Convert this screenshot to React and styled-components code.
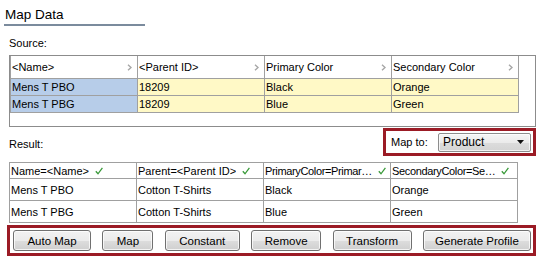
import React from 'react';
import styled, { createGlobalStyle } from 'styled-components';

const GlobalStyle = createGlobalStyle`
  html, body {
    margin: 0;
    padding: 0;
    background: #fff;
  }
  body {
    font-family: "Liberation Sans", Arial, sans-serif;
    font-size: 11px;
    color: #000;
  }
`;

const Page = styled.div`
  width: 539px;
  height: 260px;
  overflow: hidden;
  display: flex;
  flex-direction: column;
`;

const Title = styled.h1`
  margin: 0 0 0 4px;
  width: 140px;
  padding: 7px 0 1px 1px;
  font-size: 13.5px;
  line-height: 16px;
  font-weight: normal;
  border-bottom: 2px solid #7b8b9d;
`;

const Label = styled.div`
  margin: ${p => p.$top || 0}px 0 0 9px;
  line-height: 13px;
  padding-top: ${p => p.$pad || 0}px;
`;

const SourceBox = styled.div`
  margin: 5px 0 0 9px;
  width: 527px;
  height: 72px;
  box-sizing: border-box;
  border: 1px solid #8c8c8c;
  background: #fff;
`;

const Grid = styled.div`
  display: grid;
  grid-template-columns: repeat(4, 127px);
  grid-auto-rows: ${p => p.$row}px;
  grid-template-rows: ${p => p.$head}px;
  width: max-content;
  border-left: 1px solid #a0a0a0;
  border-top: ${p => (p.$framed ? '1px solid #a0a0a0' : 'none')};
`;

const Cell = styled.div`
  box-sizing: border-box;
  border-right: 1px solid #a0a0a0;
  border-bottom: 1px solid #a0a0a0;
  padding: 0 0 0 1px;
  display: flex;
  align-items: center;
  white-space: nowrap;
  overflow: hidden;
  background: ${p => p.$bg || '#fff'};
`;

const HeadText = styled.span`
  flex: ${p => (p.$grow ? 1 : '0 1 auto')};
  overflow: hidden;
  text-overflow: ellipsis;
  letter-spacing: ${p => p.$tight ? '-0.35px' : 'normal'};
`;

const Chevron = styled.svg`
  width: 5px;
  height: 7px;
  margin-right: 5px;
  flex: none;
`;

const Check = styled.svg`
  width: 8px;
  height: 8px;
  margin-left: 6px;
  flex: none;
`;

const MidRow = styled.div`
  display: flex;
  justify-content: space-between;
  align-items: flex-start;
  margin-top: 1px;
  height: 28px;
`;

const MapToBox = styled.div`
  width: 153px;
  height: 28px;
  box-sizing: border-box;
  margin-right: 3px;
  border: 3px solid #9b1b25;
  display: flex;
  align-items: center;
  justify-content: space-between;
  padding: 0 2px 0 5px;
`;

const Select = styled.div`
  width: 93px;
  height: 19px;
  box-sizing: border-box;
  border: 1px solid #8d8d8d;
  border-radius: 2px;
  background: linear-gradient(#f5f5f5, #ebebeb 50%, #dcdcdc 51%, #d4d4d4);
  box-shadow: inset 0 0 0 1px rgba(255, 255, 255, 0.7);
  display: flex;
  align-items: center;
  justify-content: space-between;
  padding: 0 6px 0 4px;
  font-size: 12px;
`;

const ResultWrap = styled.div`
  margin: 6px 0 0 9px;
`;

const ButtonBar = styled.div`
  margin: 2px 0 0 7px;
  width: 529px;
  height: 31px;
  box-sizing: border-box;
  border: 3px solid #9b1b25;
  display: flex;
  align-items: center;
  justify-content: space-between;
  padding: 0 2px 0 3px;
`;

const Button = styled.button`
  width: ${p => p.$w}px;
  height: 21px;
  box-sizing: border-box;
  border: 1px solid #707070;
  border-radius: 3px;
  background: linear-gradient(#f2f2f2, #ebebeb 50%, #dddddd 51%, #cfcfcf);
  box-shadow: inset 0 0 0 1px rgba(255, 255, 255, 0.75);
  font-family: "Liberation Sans", Arial, sans-serif;
  font-size: 11.5px;
  color: #000;
  padding: 0;
`;

const ChevronIcon = () => (
  <Chevron viewBox="0 0 5 7">
    <polyline points="1,0.8 4,3.5 1,6.2" fill="none" stroke="#a6a6a6" strokeWidth="1.4" />
  </Chevron>
);

const CheckIcon = () => (
  <Check viewBox="0 0 8 8">
    <path d="M0.8 4.3 L3 6.8 L7.4 0.8" fill="none" stroke="#3a9a3a" strokeWidth="1.3" />
  </Check>
);

const sourceCols = ['<Name>', '<Parent ID>', 'Primary Color', 'Secondary Color'];
const sourceRows = [
  ['Mens T PBO', '18209', 'Black', 'Orange'],
  ['Mens T PBG', '18209', 'Blue', 'Green'],
];

const resultCols = ['Name=<Name>', 'Parent=<Parent ID>', 'PrimaryColor=Primar…', 'SecondaryColor=Se…'];
const resultRows = [
  ['Mens T PBO', 'Cotton T-Shirts', 'Black', 'Orange'],
  ['Mens T PBG', 'Cotton T-Shirts', 'Blue', 'Green'],
];

const buttons = [
  ['Auto Map', 78],
  ['Map', 51],
  ['Constant', 75],
  ['Remove', 70],
  ['Transform', 79],
  ['Generate Profile', 108],
];

export default function App() {
  return (
    <Page>
      <GlobalStyle />
      <Title>Map Data</Title>
      <Label $top={11}>Source:</Label>
      <SourceBox>
        <Grid $head={23} $row={17}>
          {sourceCols.map(c => (
            <Cell key={c}>
              <HeadText $grow>{c}</HeadText>
              <ChevronIcon />
            </Cell>
          ))}
          {sourceRows.map(r =>
            r.map((v, i) => (
              <Cell key={r[0] + i} $bg={i === 0 ? '#b7cde9' : '#fff9c6'}>
                {v}
              </Cell>
            ))
          )}
        </Grid>
      </SourceBox>
      <MidRow>
        <Label $pad={10}>Result:</Label>
        <MapToBox>
          <span>Map to:</span>
          <Select>
            <span>Product</span>
            <svg width="7" height="4" viewBox="0 0 7 4">
              <polygon points="0,0 7,0 3.5,4" fill="#111" />
            </svg>
          </Select>
        </MapToBox>
      </MidRow>
      <ResultWrap>
        <Grid $head={16} $row={22} $framed>
          {resultCols.map((c, i) => (
            <Cell key={c}>
              <HeadText $tight={i > 1}>{c}</HeadText>
              <CheckIcon />
            </Cell>
          ))}
          {resultRows.map(r =>
            r.map((v, i) => <Cell key={r[0] + i}>{v}</Cell>)
          )}
        </Grid>
      </ResultWrap>
      <ButtonBar>
        {buttons.map(([label, w]) => (
          <Button key={label} $w={w}>{label}</Button>
        ))}
      </ButtonBar>
    </Page>
  );
}
